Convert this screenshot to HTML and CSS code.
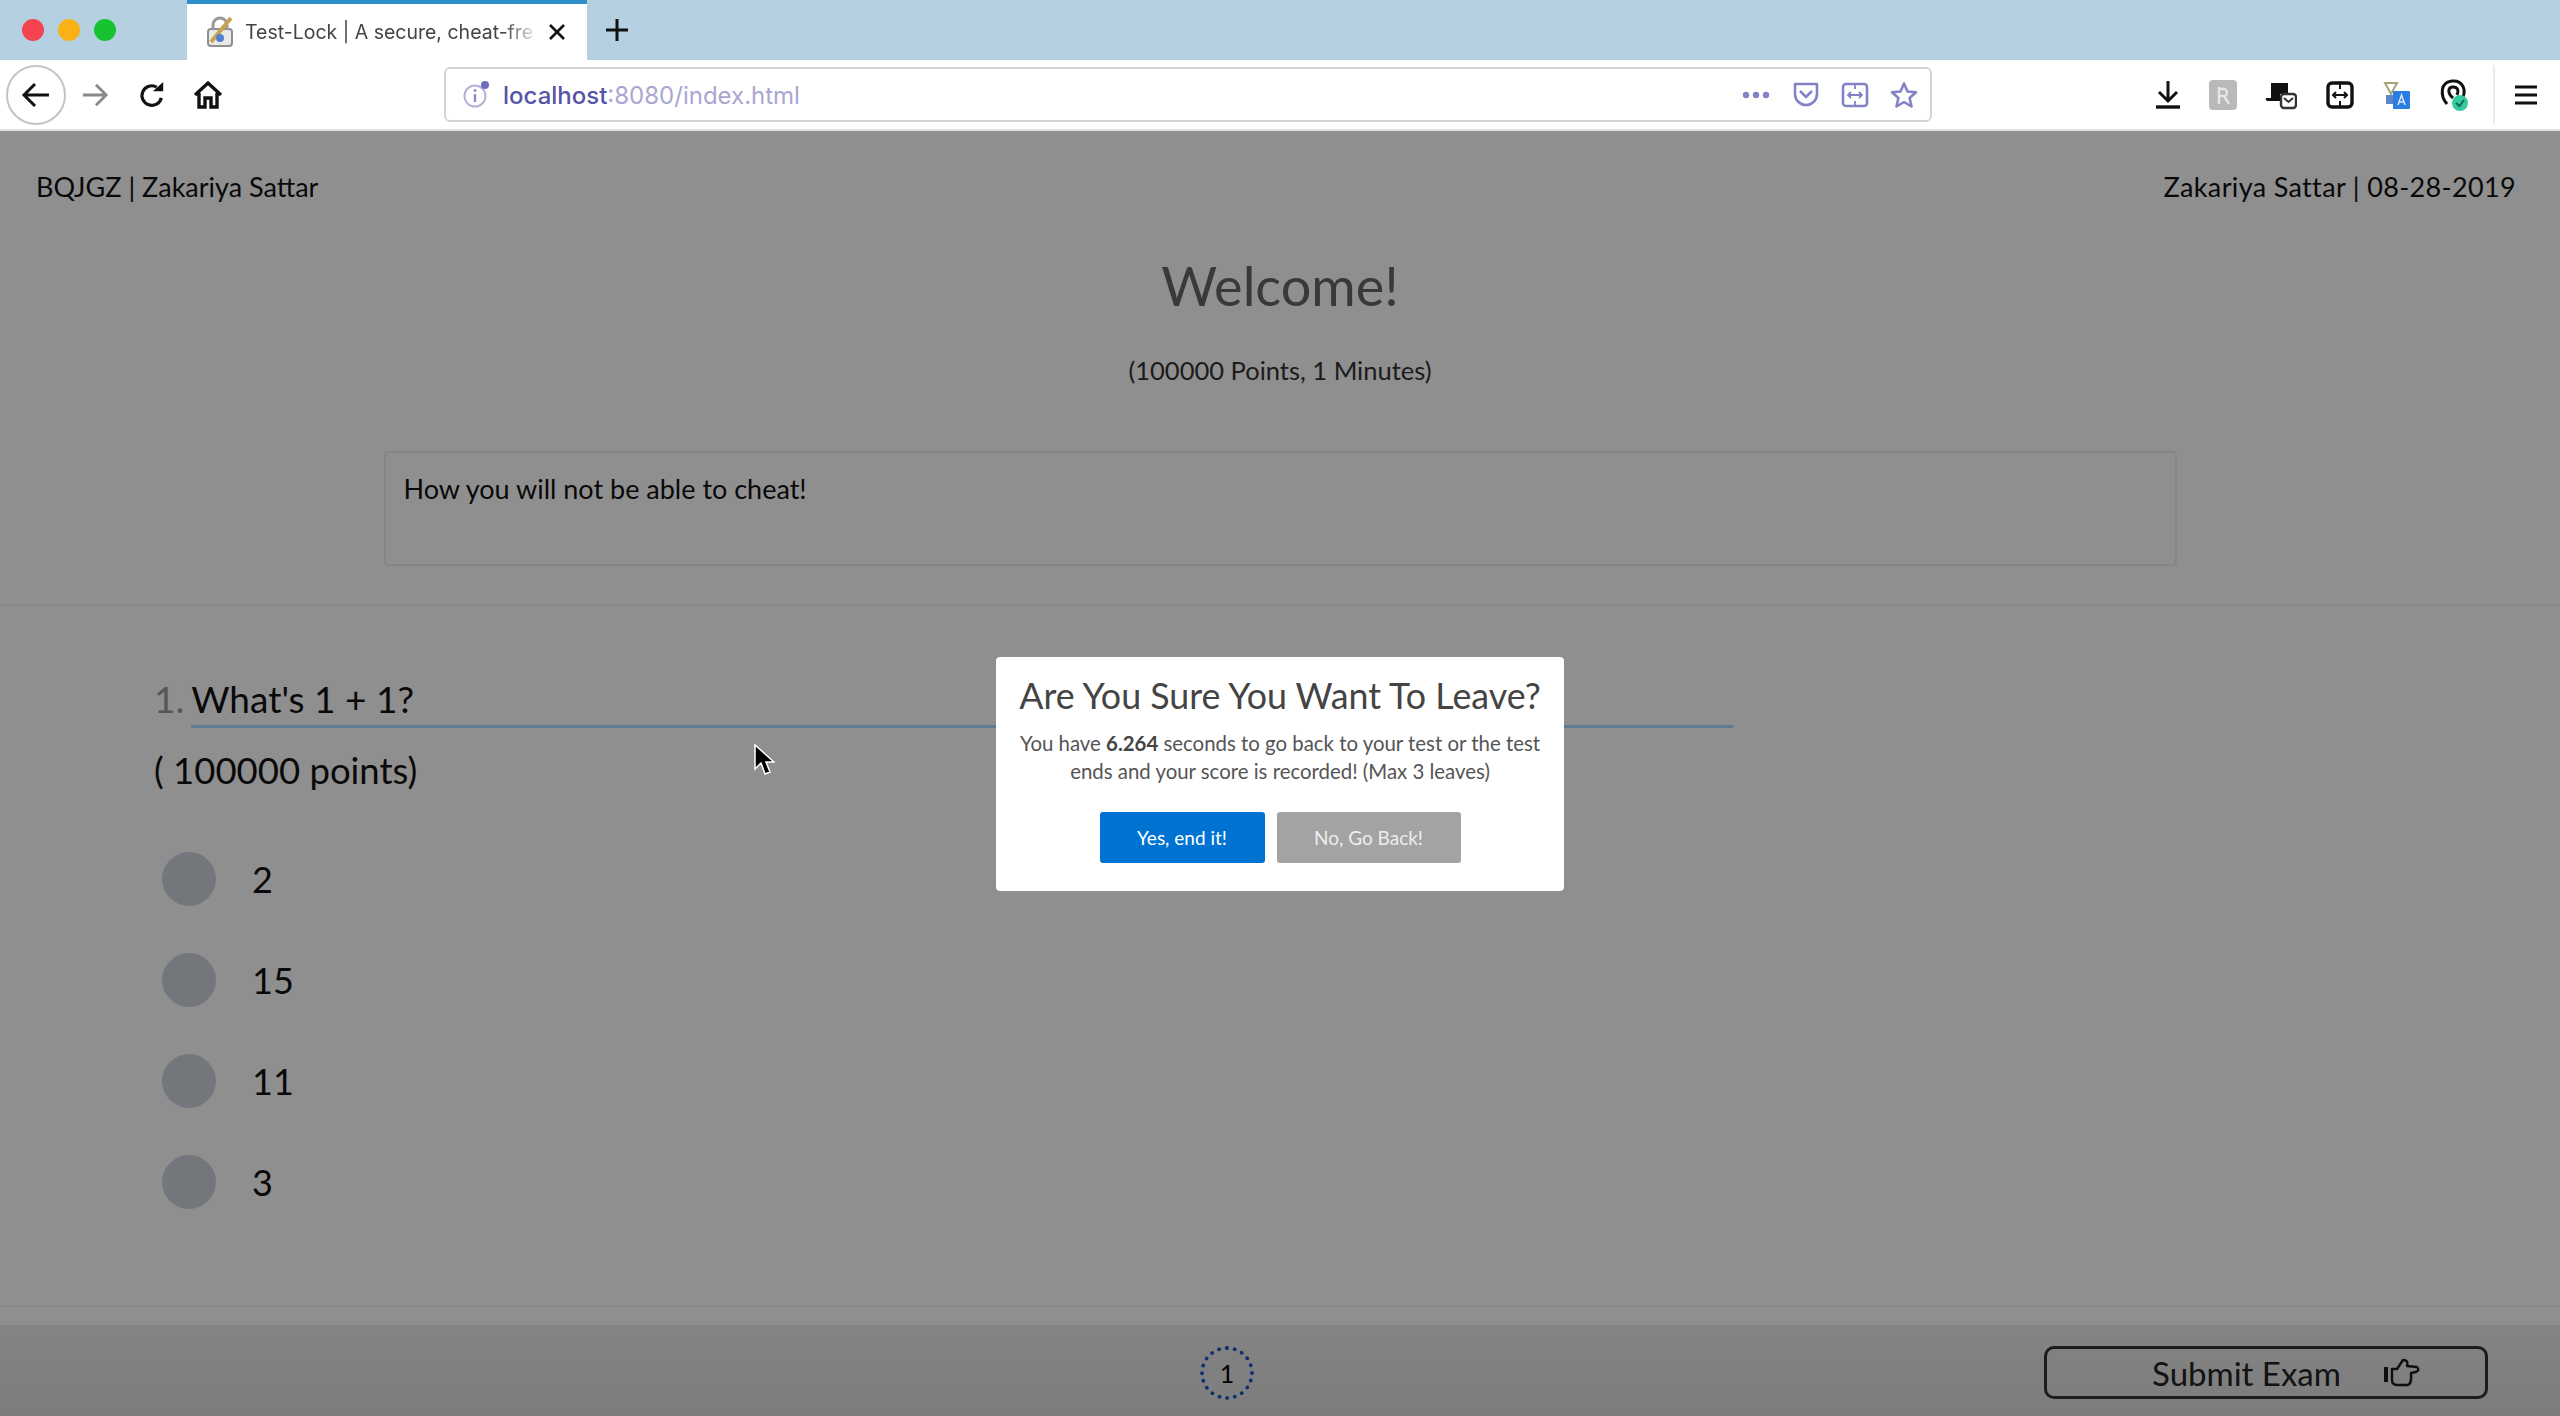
FILE: index.html
```html
<!DOCTYPE html>
<html lang="en">
<head>
  <meta charset="UTF-8">
  <title>Test-Lock | A secure, cheat-free exam</title>
  <link rel="stylesheet" href="styles.css">
</head>
<body>
  <div class="tabstrip">
    <div class="lights">
      <span class="light red"></span>
      <span class="light amber"></span>
      <span class="light green"></span>
    </div>
    <div class="tab">
      <svg class="favicon" width="32" height="32" viewBox="0 0 32 32">
        <rect x="4" y="13" width="24" height="17" rx="3" fill="#e9e9e6" stroke="#8f8f8f" stroke-width="2"/>
        <path d="M9 13V9a7 7 0 0 1 14 0v4" fill="none" stroke="#9a9a9a" stroke-width="3"/>
        <path d="M7 26 27 2" stroke="#c9a24f" stroke-width="4"/>
        <circle cx="16" cy="22" r="4" fill="#4f7fd0"/>
      </svg>
      <span class="tab-title">Test-Lock | A secure, cheat-fre</span>
      <svg class="tab-close" width="18" height="18" viewBox="0 0 18 18"><path d="M2 2 16 16M16 2 2 16" stroke="#111" stroke-width="2.6"/></svg>
    </div>
    <svg class="new-tab" width="24" height="24" viewBox="0 0 24 24"><path d="M12 1V23M1 12H23" stroke="#111" stroke-width="3"/></svg>
  </div>

  <div class="toolbar">
    <div class="back-btn">
      <svg width="30" height="30" viewBox="0 0 30 30"><path d="M28 15H3M14 4 3 15 14 26" fill="none" stroke="#111" stroke-width="3"/></svg>
    </div>
    <svg class="nav-forward" width="28" height="28" viewBox="0 0 30 30"><path d="M2 15H27M16 4 27 15 16 26" fill="none" stroke="#8a8a8a" stroke-width="3"/></svg>
    <svg class="nav-reload" width="28" height="28" viewBox="0 0 30 30"><path d="M25 18A10.500 10.500 0 1 1 20 6.500" fill="none" stroke="#111" stroke-width="3.400"/><path d="M16 11H27V1Z" fill="#111"/></svg>
    <svg class="nav-home" width="30" height="30" viewBox="0 0 30 30"><path d="M2 15 15 3 28 15M6 13V27H12V18H18V27H24V13" fill="none" stroke="#111" stroke-width="3.400"/></svg>

    <div class="urlbar">
      <svg class="url-info" width="32" height="32" viewBox="0 0 32 32">
        <circle cx="14" cy="17" r="10.500" fill="none" stroke="#b4b2d8" stroke-width="2"/>
        <path d="M14 15V23" stroke="#8f8cc4" stroke-width="2.400"/>
        <circle cx="14" cy="11.500" r="1.500" fill="#8f8cc4"/>
        <circle cx="24" cy="6" r="4" fill="#6f6cc0"/>
      </svg>
      <span class="url-text"><b>localhost</b>:8080/index.html</span>
      <div class="url-actions">
        <svg width="30" height="8" viewBox="0 0 30 8"><circle cx="5" cy="4" r="3.200"/><circle cx="15" cy="4" r="3.200"/><circle cx="25" cy="4" r="3.200"/></svg>
        <svg width="28" height="28" viewBox="0 0 28 28"><path d="M3 3H25V13A11 11 0 0 1 3 13Z" fill="none" stroke="#8482c6" stroke-width="2.600" stroke-linejoin="round"/><path d="M8 10 14 16 20 10" fill="none" stroke="#8482c6" stroke-width="2.600"/></svg>
        <svg width="28" height="28" viewBox="0 0 28 28"><rect x="2" y="3" width="24" height="22" rx="3" fill="none" stroke="#8482c6" stroke-width="2.600"/><path d="M14 3V8M14 20V25M7 14H21M10 11 7 14 10 17M18 11 21 14 18 17" fill="none" stroke="#8482c6" stroke-width="1.800"/></svg>
        <svg width="28" height="28" viewBox="0 0 28 28"><path d="M14 2.500 17.500 10.500 26 11.300 19.600 17 21.500 25.500 14 21 6.500 25.500 8.400 17 2 11.300 10.500 10.500Z" fill="none" stroke="#8482c6" stroke-width="2.600" stroke-linejoin="round"/></svg>
      </div>
    </div>

    <div class="extensions">
      <svg width="26" height="30" viewBox="0 0 26 30"><path d="M13 1V20M4 12 13 21 22 12" fill="none" stroke="#111" stroke-width="3"/><path d="M1 27H25" stroke="#111" stroke-width="3.400"/></svg>
      <svg width="28" height="30" viewBox="0 0 28 30"><rect width="28" height="30" rx="4" fill="#b9b9b9"/><path d="M10 7V24M10 9H16A4 4 0 0 1 16 16H10M15 16 20 24" fill="none" stroke="#e6e6e6" stroke-width="2.400"/></svg>
      <svg width="32" height="30" viewBox="0 0 32 30"><path d="M6 3H23V14H15V21H3Q0 21 1 18H6Z" fill="#111"/><rect x="16" y="14" width="15" height="14" rx="3" fill="#fff" stroke="#333" stroke-width="2.400"/><path d="M19 18 23.500 22 28 18" fill="none" stroke="#333" stroke-width="2"/></svg>
      <svg width="30" height="28" viewBox="0 0 28 28"><rect x="2" y="2" width="24" height="24" rx="4" fill="none" stroke="#111" stroke-width="3.400"/><path d="M14 2V8M14 20V26M7 14H21M10 11 7 14 10 17M18 11 21 14 18 17" fill="none" stroke="#111" stroke-width="2"/></svg>
      <svg width="28" height="30" viewBox="0 0 28 30"><path d="M2 3H14L8 14Z" fill="none" stroke="#a7a27a" stroke-width="2"/><path d="M3 15H10V24H3Z" fill="#5d86c9"/><rect x="10" y="11" width="17" height="18" rx="1" fill="#2a7de1"/><path d="M15 25 18.500 15 22 25M16 22H21" fill="none" stroke="#dbe9fb" stroke-width="1.500"/></svg>
      <svg width="30" height="34" viewBox="0 0 30 34"><path d="M8 26C1 18 1 4 13 3 24 2 27 12 24 19" fill="none" stroke="#111" stroke-width="3"/><path d="M14 20C8 15 9 9 14 9 19 9 20 13 18 17" fill="none" stroke="#111" stroke-width="3"/><circle cx="21" cy="25" r="8" fill="#35c9a0"/><path d="M17 25 20.500 28 25 22" fill="none" stroke="#0f6b52" stroke-width="2"/></svg>
    </div>
    <span class="toolbar-sep"></span>
    <svg class="hamburger" width="22" height="20" viewBox="0 0 22 20"><path d="M0 2H22M0 10H22M0 18H22" stroke="#111" stroke-width="3"/></svg>
  </div>

  <div class="page">
    <header class="exam-header">
      <span>BQJGZ | Zakariya Sattar</span>
      <span class="header-right">Zakariya Sattar | 08-28-2019</span>
    </header>

    <section class="intro">
      <h1>Welcome!</h1>
      <p class="meta">(100000 Points, 1 Minutes)</p>
      <div class="instructions">How you will not be able to cheat!</div>
    </section>

    <main class="question">
      <div class="q-head">
        <span class="q-num">1.</span>
        <span class="q-text">What's 1 + 1?</span>
      </div>
      <div class="q-points">( 100000 points)</div>
      <ul class="answers">
        <li><span class="radio"></span>2</li>
        <li><span class="radio"></span>15</li>
        <li><span class="radio"></span>11</li>
        <li><span class="radio"></span>3</li>
      </ul>
    </main>

    <footer class="exam-footer">
      <span class="pager">1</span>
      <button class="submit">Submit Exam
        <svg width="36" height="30" viewBox="0 0 36 30"><path d="M0 9H4V24H0Z" fill="#1c1c1c"/><path d="M8 11H13L19 2Q25 2 23 8L33 9Q36 12 32 14L27 15Q28 27 23 27H13Q8 27 8 22Z" fill="none" stroke="#1c1c1c" stroke-width="2.400" stroke-linejoin="round"/></svg>
      </button>
    </footer>

    <div class="overlay"></div>

    <div class="modal">
      <h2>Are You Sure You Want To Leave?</h2>
      <p>You have <b>6.264</b> seconds to go back to your test or the test<br>ends and your score is recorded! (Max 3 leaves)</p>
      <div class="modal-actions">
        <button class="btn btn-end">Yes, end it!</button>
        <button class="btn btn-back">No, Go Back!</button>
      </div>
    </div>

    <svg class="cursor" width="22" height="32" viewBox="0 0 22 32"><path d="M2 1V25L8 19 12 30 17 28 13 18H21Z" fill="#000" stroke="#fff" stroke-width="1.500"/></svg>
  </div>
</body>
</html>
```

FILE: styles.css
```css
* {
  box-sizing: border-box;
}

html, body {
  height: 100%;
}

body {
  margin: 0;
  height: 1416px;
  overflow: hidden;
  display: flex;
  flex-direction: column;
  font-family: 'Lato', 'Open Sans', sans-serif;
  background: #fff;
  color: #000;
}

/* browser chrome */
.tabstrip {
  height: 60px;
  display: flex;
  align-items: flex-end;
  background: #b5d1e1;
  padding-left: 22px;
}

.lights {
  display: flex;
  gap: 14px;
  width: 165px;
  align-self: center;
}

.light {
  width: 22px;
  height: 22px;
  border-radius: 50%;
}

.red { background: #f4444f; }
.amber { background: #f9b115; }
.green { background: #17c42f; }

.tab {
  width: 400px;
  height: 60px;
  display: flex;
  align-items: center;
  gap: 9px;
  padding: 0 21px 0 17px;
  background: #fff;
  border-top: 4px solid #2d8fc9;
}

.favicon {
  flex: none;
}

.tab-title {
  flex: 1;
  white-space: nowrap;
  font-family: 'Inter', sans-serif;
  font-size: 19.500px;
  color: #444;
  -webkit-mask-image: linear-gradient(to right, #000 88%, transparent);
  mask-image: linear-gradient(to right, #000 88%, transparent);
}

.tab-close {
  flex: none;
}

.new-tab {
  align-self: center;
  margin-left: 18px;
}

.toolbar {
  height: 71px;
  display: flex;
  align-items: center;
  padding-left: 6px;
  background: #fff;
  border-bottom: 2px solid #dfe3e4;
}

.back-btn {
  flex: none;
  width: 60px;
  height: 60px;
  display: flex;
  align-items: center;
  justify-content: center;
  border: 2px solid #c4c4c4;
  border-radius: 50%;
}

.nav-forward { margin-left: 15px; }
.nav-reload { margin-left: 29px; }
.nav-home { margin-left: 27px; }

.urlbar {
  width: 1488px;
  height: 55px;
  margin-left: 221px;
  display: flex;
  align-items: center;
  padding: 0 12px 0 15px;
  border: 2px solid #d4d4d6;
  border-radius: 6px;
}

.url-text {
  margin: 2px 0 0 10px;
  font-family: 'Inter', sans-serif;
  font-size: 24px;
  color: #a9a6d2;
}

.url-text b {
  font-weight: 500;
  color: #5654a6;
}

.url-actions {
  margin-left: auto;
  display: flex;
  align-items: center;
  gap: 21px;
  fill: #8482c6;
}

.extensions {
  display: flex;
  align-items: center;
  gap: 28px;
  margin-left: 223px;
}

.toolbar-sep {
  width: 2px;
  height: 60px;
  margin-left: 24px;
  background: #ececec;
}

.hamburger {
  margin-left: 20px;
}

/* exam page, dimmed by the overlay */
.page {
  position: relative;
  flex: 1;
  display: flex;
  flex-direction: column;
  background: #fff;
}

.exam-header {
  display: flex;
  justify-content: space-between;
  padding: 40px 44px 0 36px;
  font-size: 27px;
  line-height: 32px;
  color: #111;
}

.header-right {
  letter-spacing: 0.35px;
}

.intro {
  height: 403px;
  text-align: center;
  border-bottom: 2px solid #f4f4f4;
  padding-top: 50px;
}

.intro h1 {
  margin: 0;
  font-size: 54px;
  line-height: 66px;
  font-weight: 400;
  color: #666;
}

.meta {
  margin: 36px 0 0;
  font-size: 25.500px;
  line-height: 30px;
  color: #333;
}

.instructions {
  width: 1793px;
  height: 115px;
  margin: 66px auto 0;
  padding: 19px 18px;
  border: 2px solid #eee;
  border-radius: 4px;
  text-align: left;
  font-size: 27px;
  line-height: 34px;
  color: #111;
}

.question {
  flex: 1;
  margin-bottom: 18px;
  padding: 70px 0 0 154px;
  border-bottom: 2px solid #f2f2f2;
}

.q-head {
  display: flex;
  gap: 7px;
  height: 52px;
  font-size: 37px;
  line-height: 46px;
  color: #111;
}

.q-num {
  color: #999;
}

.q-text {
  width: 1542px;
  border-bottom: 3px solid #a8dcff;
}

.q-points {
  margin-top: 19px;
  font-size: 36.500px;
  line-height: 46px;
  color: #111;
}

.answers {
  list-style: none;
  margin: 35px 0 0;
  padding: 0 0 0 8px;
}

.answers li {
  display: flex;
  align-items: center;
  height: 101px;
  font-size: 36px;
  color: #111;
}

.radio {
  width: 54px;
  height: 54px;
  margin-right: 36px;
  border-radius: 50%;
  background: #ced4de;
}

.exam-footer {
  position: relative;
  height: 91px;
  display: flex;
  align-items: center;
  justify-content: flex-end;
  padding: 4px 72px 0 0;
  background: linear-gradient(#ebebeb, #dedede);
}

.pager {
  position: absolute;
  left: 1200px;
  top: 21px;
  width: 54px;
  height: 54px;
  display: flex;
  align-items: center;
  justify-content: center;
  border: 4px dotted #1f52c4;
  border-radius: 50%;
  font-size: 25px;
}

.submit {
  width: 444px;
  height: 53px;
  display: flex;
  align-items: center;
  justify-content: center;
  gap: 43px;
  padding: 0 0 0 40px;
  background: none;
  border: 3px solid #333;
  border-radius: 10px;
  font-family: inherit;
  font-size: 33px;
  color: #222;
}

.overlay {
  position: absolute;
  inset: 0;
  background: rgba(0, 0, 0, 0.44);
}

.modal {
  position: absolute;
  left: 996px;
  top: 526px;
  width: 568px;
  height: 234px;
  padding: 17px 10px 0;
  background: #fff;
  border-radius: 4px;
  text-align: center;
}

.modal h2 {
  margin: 0;
  font-size: 35.800px;
  line-height: 44px;
  font-weight: 400;
  color: #444;
}

.modal p {
  margin: 11px 0 0;
  font-size: 20.400px;
  line-height: 28px;
  color: #555;
}

.modal p b {
  color: #444;
}

.modal-actions {
  display: flex;
  justify-content: center;
  gap: 12px;
  margin-top: 27px;
}

.btn {
  height: 51px;
  border: 0;
  border-radius: 3px;
  font-family: inherit;
  font-size: 19px;
  color: #fff;
}

.btn-end {
  width: 165px;
  background: #0073d2;
}

.btn-back {
  width: 184px;
  background: #a3a3a3;
  color: #eee;
}

.cursor {
  position: absolute;
  left: 753px;
  top: 613px;
}
```
